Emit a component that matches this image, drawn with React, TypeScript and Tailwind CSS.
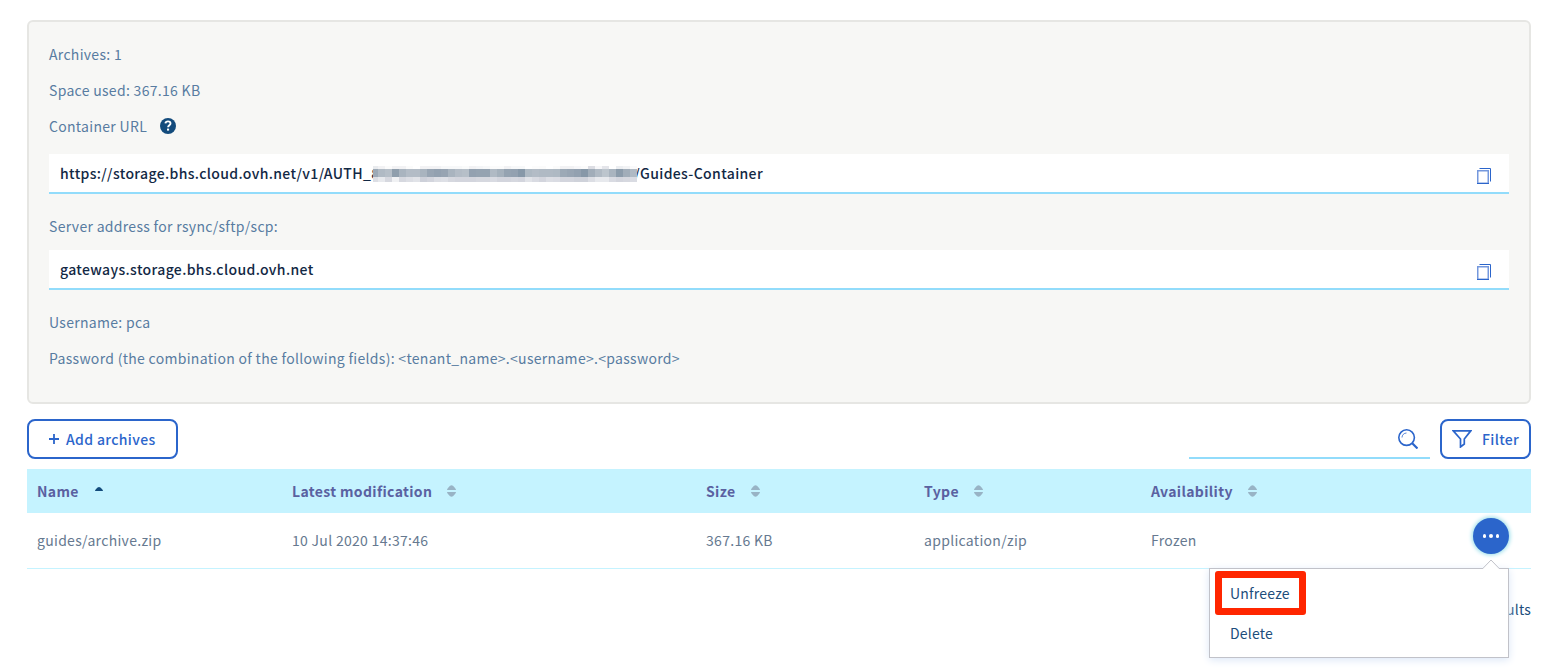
import React from 'react';

const mosaicTop = ['#e9ebee','#f2f2f4','#fbfbfb','#f2f2f4','#f2f2f4','#fbfbfb','#ffffff','#f2f2f4','#f2f2f4','#f2f2f4','#f7f8f9','#f7f8f9','#f7f8f9','#fafbfb','#f2f2f4','#f4f5f7','#f7f8f9','#fbfbfb','#fbfbfb','#f2f2f4','#f7f8f9','#f7f8f9','#ffffff','#fcfcfc','#fbfbfb','#ffffff','#fbfbfb','#f2f2f4','#f2f2f4','#f7f7f9','#fbfbfb','#dcdde3','#f7f7f9','#e4e5ea','#ffffff','#eceef1','#f2f3f5','#fafafb'];
const mosaicMid = ['#9ca9b6','#b0bac4','#b6bfc8','#8f9eac','#a9b4bf','#b3bcc6','#b3bcc6','#a9b4bf','#98a5b3','#93a1b0','#97a4b2','#a9b4bf','#b3bcc6','#b6bfc8','#93a1b0','#95a3b1','#95a3b1','#b0bac4','#a5b1bc','#95a3b1','#93a1b0','#8798a8','#aeb9c3','#b3bcc6','#b0bac4','#b0bac4','#aeb9c3','#9ca9b6','#98a5b3','#93a1b0','#8798a8','#a1adb9','#b0bac4','#bcc5cd','#a9b4bf','#8c9cab','#a1adb9','#b0bac4'];
const mosaicBottom = ['#dcdee4','#e7e9ed','#d6d8df','#f0f1f3','#d6d8df','#dcdee4','#e1e3e8','#cdd0d9','#d3d5dd','#dcdee4','#dee0e6','#d6d8df','#d3d5dd','#d3d5dd','#d3d5dd','#d6d8df','#d6d8df','#d9dbe2','#d3d5dd','#d3d5dd','#d6d8df','#d3d5dd','#e1e3e8','#d9dbe2','#d3d5dd','#dcdee4','#dadce3','#d3d5dd','#d3d5dd','#cfd2da','#cfd2da','#dcdee4','#e7e9ed','#e7e9ed','#d9dbe2','#d3d5dd','#d6d8df','#d9dbe2'];

function MosaicRow({ colors, y, h }: { colors: string[]; y: number; h: number }) {
  return (
    <>
      {colors.map((c, i) => (
        <rect key={i} x={i === 0 ? 0 : 5 + (i - 1) * 7} y={y} width={i === 0 ? 5 : 7} height={h} fill={c} />
      ))}
    </>
  );
}

function Redaction() {
  return (
    <svg className="absolute left-[324px] top-3 h-4 w-[265px]" viewBox="0 0 265 16" shapeRendering="crispEdges">
      <MosaicRow colors={mosaicTop} y={0} h={3} />
      <MosaicRow colors={mosaicMid} y={3} h={8} />
      <MosaicRow colors={mosaicBottom} y={11} h={5} />
    </svg>
  );
}

function CopyIcon() {
  return (
    <svg className="mt-[6px] h-4 w-[14px]" viewBox="0 0 14 16" fill="none">
      <path d="M2.5 .5H13.5V13.5" stroke="#2b65cb" />
      <rect x=".75" y="2.75" width="10.5" height="12.5" stroke="#7598dd" strokeWidth="1.5" />
      <path d="M0 15.5H12" stroke="#2b65cb" />
    </svg>
  );
}

function CopyField({ children }: { children: React.ReactNode }) {
  return (
    <div className="relative flex h-10 items-center justify-between border-b-2 border-[#92dcfb] bg-white pr-[18px] pl-[11px] text-[14px] font-medium tracking-[0.36px] text-[#122844]">
      {children}
      <CopyIcon />
    </div>
  );
}

function SortIcon() {
  return (
    <svg className="mb-px h-3 w-[9px]" viewBox="0 0 9 12" fill="#98b3c5">
      <path d="M0 5C0 3.8 2.8 .3 4.5 .3S9 3.8 9 5Z" />
      <path d="M0 7C0 8.2 2.8 11.7 4.5 11.7S9 8.2 9 7Z" />
    </svg>
  );
}

function Heading({ children }: { children: React.ReactNode }) {
  return (
    <div className="flex items-center gap-[15px]">
      <span>{children}</span>
      <SortIcon />
    </div>
  );
}

export default function App() {
  return (
    <main className="h-[671px] overflow-hidden bg-white pt-5 pr-[23px] pl-[27px] font-['Noto_Sans_CJK_SC',sans-serif] text-[14px] leading-5 tracking-[0.2px]">
      <section className="h-[384px] rounded-md border-2 border-[#e6e6e3] bg-[#f7f7f5] px-5 pt-[22px] tracking-[0.305px] text-[#587ca1]">
        <p className="mb-4">Archives: 1</p>
        <p className="mb-4">Space used: 367.16 KB</p>
        <div className="mb-[18px] flex items-center gap-[13px]">
          <span>Container URL</span>
          <svg className="h-4 w-4" viewBox="0 0 16 16">
            <circle cx="8" cy="8" r="8" fill="#134b7c" />
            <path d="M5.4 5.4C5.6 4.2 6.6 3.4 8 3.4C9.5 3.4 10.5 4.3 10.5 5.5C10.5 7.3 8.1 7.3 8.1 9.3" fill="none" stroke="white" strokeWidth="1.9" />
            <rect x="7" y="10.6" width="2.1" height="2" fill="white" />
          </svg>
        </div>
        <CopyField>
          <div className="flex w-[703px] justify-between whitespace-nowrap">
            <span>https://storage.bhs.cloud.ovh.net/v1/AUTH_8</span>
            <span>/Guides-Container</span>
          </div>
          <Redaction />
        </CopyField>
        <p className="mt-[22px] mb-[14px]">Server address for rsync/sftp/scp:</p>
        <CopyField>
          <span>gateways.storage.bhs.cloud.ovh.net</span>
        </CopyField>
        <p className="mt-[22px] mb-4">Username: pca</p>
        <p>Password (the combination of the following fields): &lt;tenant_name&gt;.&lt;username&gt;.&lt;password&gt;</p>
      </section>

      <div className="mt-[15px] flex h-10 text-[#2b65cb]">
        <button className="flex w-[151px] items-center rounded-lg border-2 border-[#2b65cb] pl-5 font-medium tracking-[0.35px]">
          <svg className="mr-[7px] h-[10px] w-[10px]" viewBox="0 0 10 10">
            <path d="M5 0V10M0 5H10" stroke="currentColor" strokeWidth="1.8" />
          </svg>
          Add archives
        </button>
        <div className="ml-auto flex w-[241px] items-center justify-end border-b-2 border-[#92dcfb] pr-[12px]">
          <svg className="mt-[2px] h-5 w-5" viewBox="0 0 20 20" fill="none" stroke="currentColor">
            <circle cx="8.6" cy="8.6" r="7.8" strokeWidth="1.6" />
            <path d="M14.2 14.2L19.5 19.5" strokeWidth="2.2" />
            <path d="M4 8.5C4 6 6 4 8.5 4" strokeWidth=".8" />
          </svg>
        </div>
        <button className="ml-[10px] flex w-[91px] items-center rounded-lg border-2 border-[#2b65cb] pl-[10px] font-medium tracking-[0.35px]">
          <svg className="mr-[10px] h-[18px] w-5" viewBox="0 0 20 18" fill="none" stroke="currentColor" strokeWidth="1.7">
            <path d="M1.3 .9H18.7L12.3 9V14L8.5 17V9Z" />
          </svg>
          Filter
        </button>
      </div>

      <div className="mt-[10px] grid h-11 grid-cols-[255px_414px_218px_227px_1fr] items-center bg-[#c5f3ff] pl-[10px] font-bold tracking-[0.35px] text-[#5a61a1]">
        <div className="flex items-center gap-4">
          <span>Name</span>
          <svg className="mb-[5px] h-1 w-[8px]" viewBox="0 0 7 4" preserveAspectRatio="none">
            <path d="M0 4C0 3 2 0 3.5 0S7 3 7 4Z" fill="#134b7c" />
          </svg>
        </div>
        <Heading>Latest modification</Heading>
        <Heading>Size</Heading>
        <Heading>Type</Heading>
        <Heading>Availability</Heading>
      </div>
      <div className="relative grid h-14 grid-cols-[255px_414px_218px_227px_1fr] items-center border-b border-[#c5f3ff] pl-[10px] tracking-[0.3px] text-[#667990]">
        <span className="mb-[2px]">guides/archive.zip</span>
        <span className="mb-[2px]">10 Jul 2020 14:37:46</span>
        <span className="mb-[2px]">367.16 KB</span>
        <span className="mb-[2px]">application/zip</span>
        <div className="flex items-center justify-between pr-[22px]">
          <span className="mb-[2px]">Frozen</span>
          <button className="mb-[9px] flex h-9 w-9 items-center justify-center gap-[3px] rounded-full bg-[#2b65cb] shadow-[0_0_4px_1px_#92dce9]">
            <i className="h-[3.5px] w-[3.5px] rounded-full bg-white" />
            <i className="h-[3.5px] w-[3.5px] rounded-full bg-white" />
            <i className="h-[3.5px] w-[3.5px] rounded-full bg-white" />
          </button>
        </div>
        <div className="absolute top-[55px] right-[22px] z-10 h-[90px] w-[300px] border border-[#c1c2c9] bg-white px-5 pt-[14px] tracking-[0.2px] text-[#204d7b] shadow-[0_2px_8px_#dce7f7]">
          <svg className="absolute -top-[10px] right-[7px] h-[11px] w-5" viewBox="0 0 20 11">
            <path d="M1.5 10L10 1.5L18.5 10V11H1.5Z" fill="white" />
            <path d="M1 9.5H1.8L10 1L18.2 9.5H19" fill="none" stroke="#c1c2c9" />
          </svg>
          <div className="absolute top-[2px] left-[5px] h-[44px] w-[91px] rounded-[3px] border-[7px] border-[#ff2600]" />
          <p className="mb-5">Unfreeze</p>
          <p>Delete</p>
        </div>
      </div>
      <p className="mt-[30px] text-right text-[#204d7b]">1 of 1 results</p>
    </main>
  );
}
